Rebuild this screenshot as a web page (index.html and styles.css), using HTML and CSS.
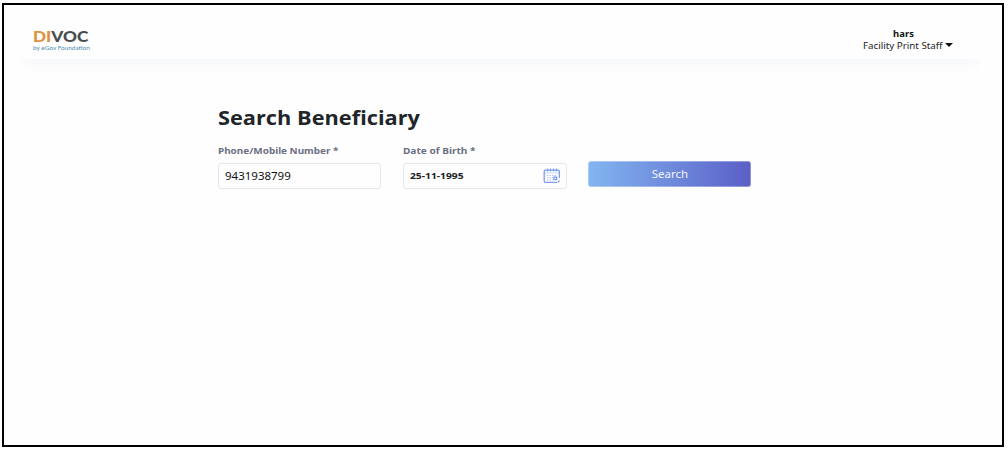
FILE: index.html
```
<!DOCTYPE html>
<html lang="en">
<head>
<meta charset="utf-8">
<title>Search Beneficiary</title>
<link rel="stylesheet" href="styles.css">
</head>
<body>
<div class="frame">
  <header class="header">
    <div class="logo">
      <div class="logo-name"><span class="logo-accent">DI</span>VOC</div>
      <div class="logo-sub">by eGov Foundation</div>
    </div>
    <div class="user">
      <div class="user-name">hars</div>
      <div class="user-role"><span class="role-text">Facility Print Staff</span><span class="caret"></span></div>
    </div>
  </header>
  <main class="main">
    <h1 class="title">Search Beneficiary</h1>
    <form class="form">
      <div class="field">
        <label class="label label-phone">Phone/Mobile Number *</label>
        <div class="input phone"><span>9431938799</span></div>
      </div>
      <div class="field">
        <label class="label label-date">Date of Birth *</label>
        <div class="input date"><span class="date-text">25-11-1995</span>
          <svg class="calendar" width="18" height="16" viewBox="0 0 18 16" fill="none" stroke="#7c9df0">
            <path d="M16.4 10V3.6Q16.4 2.2 15 2.2H2.6Q1.2 2.2 1.2 3.6V12.9Q1.2 14.3 2.6 14.3H14.2" stroke-width="1.3"/>
            <path d="M1 5H16.5" stroke-width=".7" opacity=".55"/>
            <path d="M4.5 .5V3.6M7.5 .5V3.6M10.5 .5V3.6M13.5 .5V3.6" stroke-width="1.2"/>
            <path d="M4 7.5H14M4 9.8H10M4 12H10" stroke-width="1.1" stroke-dasharray="1.2 1.4" opacity=".75"/>
            <rect x="11" y="9.1" width="2.6" height="2.4" stroke-width="1.3"/>
            <path d="M14.8 14.2Q16.2 14 16.4 12.4" stroke-width="1.2"/>
          </svg>
        </div>
      </div>
      <button class="button" type="button">Search</button>
    </form>
  </main>
</div>
</body>
</html>
```
FILE: styles.css
```
* { box-sizing: border-box; }
body { margin: 0; width: 1008px; height: 450px; padding: 3px 0 0 2px; overflow: hidden; background: #fff; font-family: "Noto Sans", "Open Sans", sans-serif; color: #212529; }
.frame { width: 1002px; height: 444px; border: 2px solid #000; background: #fefefe; padding: 0 22px 0 17px; }
.header { height: 54px; display: flex; justify-content: space-between; background: #fefefe; box-shadow: 0 6px 12px -2px #f3f5f9; clip-path: inset(0 0 -22px 0); }
.logo { padding: 23px 0 0 12px; white-space: nowrap; }
.logo-name { font: 900 15.5px/17px Lato, sans-serif; color: #4b4c50; width: max-content; transform-origin: left; transform: scaleX(1.11); }
.logo-accent { color: #dc923f; }
.logo-sub { font: 400 6px/7px Lato, sans-serif; color: #4f8cb4; margin-top: -1px; width: max-content; transform-origin: left; transform: scaleX(1.07); }
.user { width: 96px; margin-right: 20px; padding-top: 22px; text-align: center; white-space: nowrap; }
.user-name { font-size: 9px; line-height: 13px; font-weight: 700; color: #111; margin-right: 17px; transform: scaleX(1.05); }
.user-role { font-size: 9px; line-height: 12px; display: flex; align-items: center; color: #222; margin-left: -1px; }
.role-text { transform-origin: left; transform: scaleX(1.085); }
.caret { border: 4px solid transparent; border-top-color: #111; border-bottom: 0; margin-left: 9px; margin-top: -3px; }
.main { padding: 46px 0 0 197px; }
.title { margin: 0; font: 700 20px/26px "Open Sans", sans-serif; transform-origin: left; transform: scaleX(1.088); white-space: nowrap; width: max-content; }
.form { display: flex; gap: 22px; margin-top: 14px; }
.field { width: 163.4px; }
.label { display: block; font-size: 9.5px; line-height: 12px; font-weight: 700; color: #6b6f83; width: max-content; transform-origin: left; }
.label-phone { transform: scaleX(1.045); }
.label-date { transform: scaleX(1.06); }
.input { height: 26px; margin-top: 6px; border: 1px solid #e7e7e9; border-radius: 3px; padding: 0 5px 0 6px; display: flex; align-items: center; justify-content: space-between; background: #fefefe; }
.phone { font-size: 11.5px; color: #111; padding-bottom: 2px; }
.date { font-size: 9.5px; font-weight: 700; color: #222; }
.date-text { padding-bottom: 2px; transform-origin: left; transform: scaleX(1.08); }
.button { width: 163px; height: 26px; margin: 16px 0 0 -.4px; padding: 0; border: 1px solid #ffffff55; border-radius: 3px; background: linear-gradient(90deg, #82b6f1, #5b5fc7) border-box; color: #f2f4fc; font: 11.5px/24px "Noto Sans", sans-serif; }
```
